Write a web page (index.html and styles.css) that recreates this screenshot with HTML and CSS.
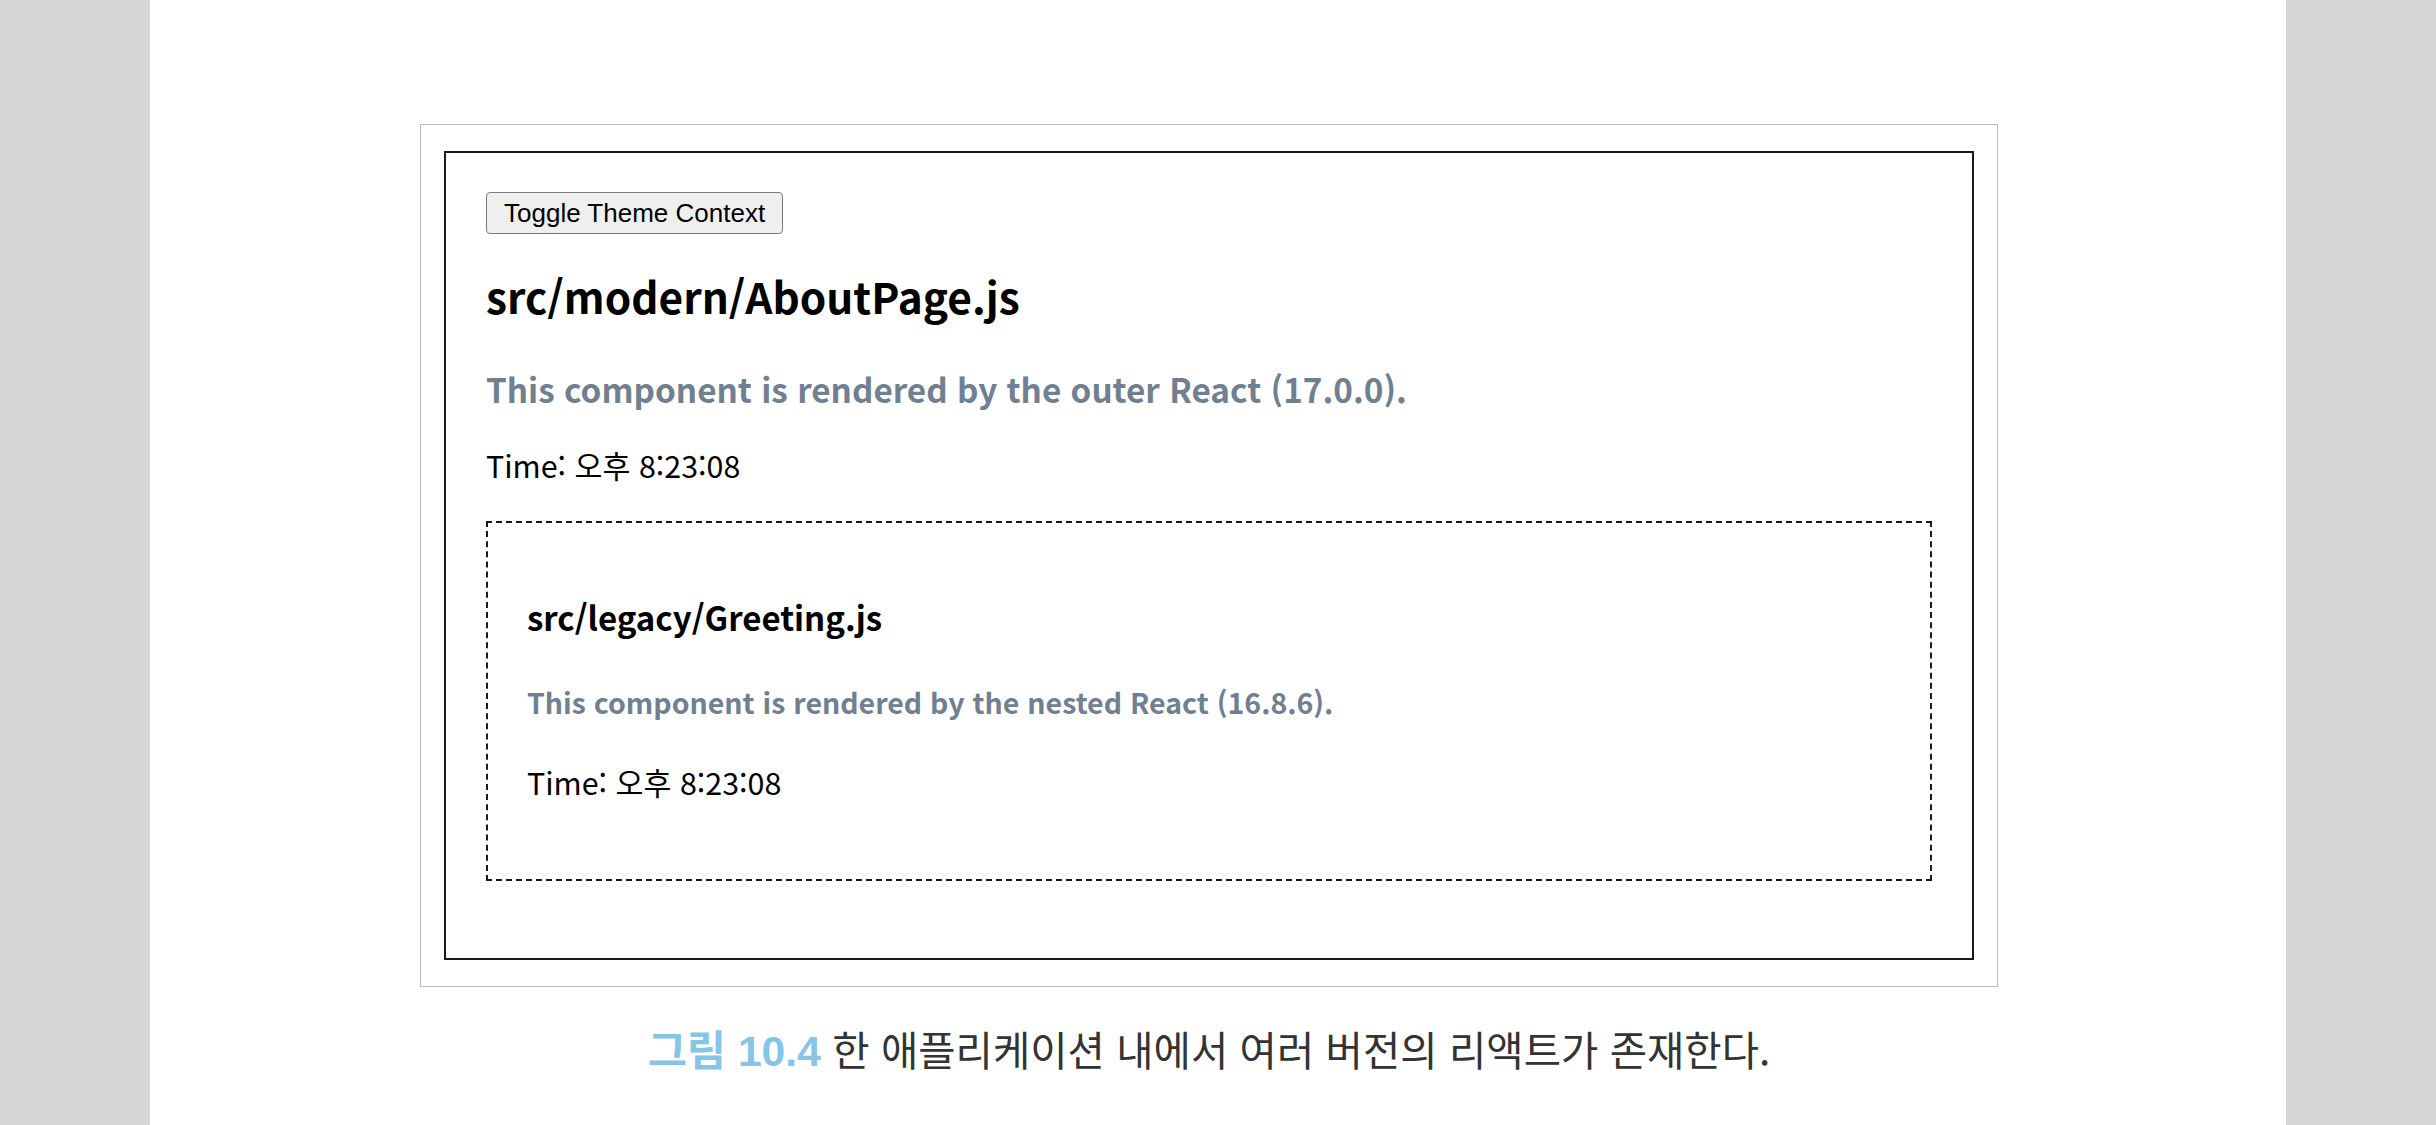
FILE: index.html
```html
<!DOCTYPE html>
<html lang="ko">
<head>
<meta charset="utf-8">
<title>그림 10.4</title>
<link rel="stylesheet" href="styles.css">
</head>
<body>
<div class="page">
  <div class="figure">
    <div class="frame">
      <div class="app">
        <button class="toggle" type="button">Toggle Theme Context</button>
        <h2 class="title">src/modern/AboutPage.js</h2>
        <h3 class="note">This component is rendered by the outer React (17.0.0).</h3>
        <p class="time">Time: 오후 8:23:08</p>
        <div class="legacy">
          <h3 class="title-sm">src/legacy/Greeting.js</h3>
          <h4 class="note-sm">This component is rendered by the nested React (16.8.6).</h4>
          <p class="time time-sm">Time: 오후 8:23:08</p>
        </div>
      </div>
    </div>
    <p class="caption"><span class="fig-num">그림 10.4</span> 한 애플리케이션 내에서 여러 버전의 리액트가 존재한다.</p>
  </div>
</div>
</body>
</html>
```

FILE: styles.css
```css
html, body {
  margin: 0;
  padding: 0;
}
body {
  background: #d6d6d6;
  font-family: "Noto Sans CJK KR", "Noto Sans", sans-serif;
}
.page {
  width: 2136px;
  min-height: 1125px;
  margin: 0 auto;
  background: #ffffff;
  padding-top: 124px;
  box-sizing: border-box;
}
.figure {
  margin-left: 270px;
  width: 1578px;
}
.frame {
  border: 1px solid #bababa;
  padding: 26px 23px;
}
.app {
  border: 2px solid #1a1a1a;
  padding: 39px 40px 77px 40px;
  color: #000;
}
.toggle {
  display: block;
  height: 42px;
  box-sizing: border-box;
  padding: 0 17px;
  margin: 0;
  font-family: "Liberation Sans", Arial, sans-serif;
  font-size: 26px;
  color: #000;
  background: #efefef;
  border: 1px solid #7a7a7a;
  border-radius: 4px;
}
.title {
  margin: 37px 0 0 0;
  font-size: 42.4px;
  line-height: 1.2;
  font-weight: 700;
}
.note {
  margin: 47px 0 0 0;
  font-size: 33.3px;
  line-height: 1.2;
  font-weight: 700;
  color: #708090;
}
.time {
  margin: 38px 0 0 0;
  font-size: 30.4px;
  line-height: 1.2;
  font-weight: 400;
}
.legacy {
  margin-top: 38px;
  border: 2px dashed #1a1a1a;
  padding: 75px 39px 78px 39px;
}
.title-sm {
  margin: 0;
  font-size: 33px;
  line-height: 1.2;
  font-weight: 700;
}
.note-sm {
  margin: 47px 0 0 0;
  font-size: 28.5px;
  line-height: 1.2;
  font-weight: 700;
  color: #708090;
}
.time-sm {
  margin-top: 45px;
}
.caption {
  margin: 38px 0 0 0;
  text-align: center;
  font-size: 40.6px;
  line-height: 1.2;
  color: #333333;
}
.fig-num {
  font-family: "Liberation Sans", "Noto Sans CJK KR", sans-serif;
  font-size: 1.05em;
  color: #86c5e6;
  font-weight: 700;
}
```
